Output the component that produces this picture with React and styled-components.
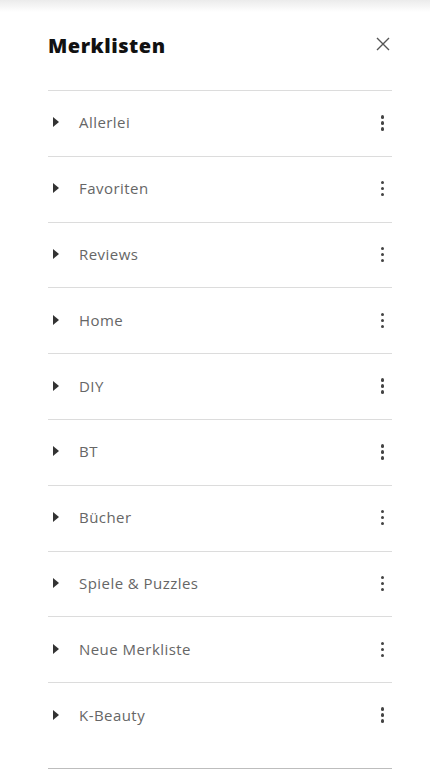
import React from 'react';
import styled, { createGlobalStyle } from 'styled-components';

const GlobalStyle = createGlobalStyle`
  html, body {
    margin: 0;
    padding: 0;
    background: #fff;
  }
  body {
    font-family: "Open Sans", "Liberation Sans", sans-serif;
  }
`;

const Panel = styled.div`
  width: 430px;
  height: 770px;
  overflow: hidden;
  background: #fff;
`;

const TopShade = styled.div`
  height: 12px;
  background: linear-gradient(#ebebeb, #fff);
`;

const Inner = styled.div`
  padding: 0 38px 0 48px;
`;

const Header = styled.div`
  display: flex;
  align-items: center;
  justify-content: space-between;
  height: 66px;
  border-bottom: 1px solid #dcdcdc;
  padding-bottom: 12px;
`;

const Title = styled.h1`
  margin: 0;
  font-size: 20px;
  font-weight: 800;
  color: #111;
  letter-spacing: 0.5px;
`;

const CloseButton = styled.button`
  border: 0;
  background: none;
  padding: 0;
  width: 20px;
  height: 20px;
  display: flex;
  align-items: center;
  justify-content: center;
  margin-right: -1px;
  margin-top: -2px;
  cursor: pointer;
`;

const List = styled.ul`
  list-style: none;
  margin: 0;
  padding: 0;
`;

const Row = styled.li`
  display: flex;
  align-items: center;
  height: 64.8px;
  border-bottom: 1px solid ${({ last }) => (last ? 'transparent' : '#dcdcdc')};
`;

const Caret = styled.span`
  width: 0;
  height: 0;
  margin-left: 5px;
  margin-top: -2px;
  border-top: 5px solid transparent;
  border-bottom: 5px solid transparent;
  border-left: 6px solid #333;
`;

const Label = styled.span`
  flex: 1;
  margin-left: 20px;
  margin-top: -2px;
  font-size: 15px;
  letter-spacing: 0.45px;
  color: #666;
`;

const Kebab = styled.span`
  display: flex;
  flex-direction: column;
  gap: 2.5px;
  margin-right: 8px;
  margin-top: -1px;

  i {
    display: block;
    width: 3.5px;
    height: 3.5px;
    border-radius: 50%;
    background: #444;
  }
`;

const Footer = styled.div`
  margin-top: 19px;
  border-top: 1px solid #bdbdbd;
`;

const lists = [
  'Allerlei',
  'Favoriten',
  'Reviews',
  'Home',
  'DIY',
  'BT',
  'Bücher',
  'Spiele & Puzzles',
  'Neue Merkliste',
  'K-Beauty',
];

function App() {
  return (
    <>
      <GlobalStyle />
      <Panel>
        <TopShade />
        <Inner>
          <Header>
            <Title>Merklisten</Title>
            <CloseButton aria-label="Schließen">
              <svg width="14" height="14" viewBox="0 0 14 14">
                <path d="M1 1L13 13M13 1L1 13" stroke="#555" strokeWidth="1.4" fill="none" />
              </svg>
            </CloseButton>
          </Header>
          <List>
            {lists.map((name, i) => (
              <Row key={name} last={i === lists.length - 1}>
                <Caret />
                <Label>{name}</Label>
                <Kebab>
                  <i />
                  <i />
                  <i />
                </Kebab>
              </Row>
            ))}
          </List>
          <Footer />
        </Inner>
      </Panel>
    </>
  );
}

export default App;
